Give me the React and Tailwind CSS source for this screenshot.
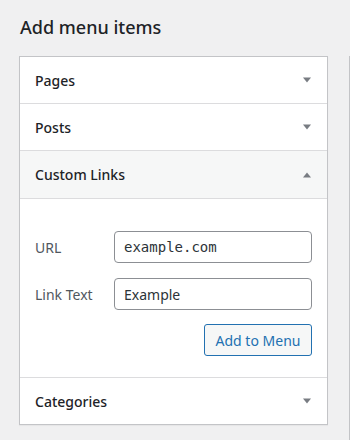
import React from "react";

const font = { fontFamily: '"Noto Sans", "Liberation Sans", sans-serif' };

function Arrow({ up }) {
  return (
    <svg width="10" height="6" viewBox="0 0 10 6" className="shrink-0">
      {up ? (
        <path d="M1 5.5 L5 0.5 L9 5.5 Z" fill="#787c82" />
      ) : (
        <path d="M1 0.5 L9 0.5 L5 5.5 Z" fill="#787c82" />
      )}
    </svg>
  );
}

function SectionTitle({ label, open, tall }) {
  return (
    <div
      className={`flex items-center justify-between pl-[15px] pr-[15px] text-[14px] font-medium text-[#1d2327] ${
        tall ? "h-[47px]" : "h-[46px]"
      } ${open ? "bg-[#f6f7f7]" : "bg-white"}`}
    >
      <span>{label}</span>
      <Arrow up={open} />
    </div>
  );
}

export default function App() {
  return (
    <div
      className="h-[440px] w-full overflow-hidden bg-[#f0f0f1] pl-[19px] pt-[14px]"
      style={font}
    >
      <h2 className="mb-[16px] pl-[1px] text-[18px] font-medium leading-[26px] text-[#1d2327]">
        Add menu items
      </h2>

      <div className="flex items-start gap-[21px]">
        {/* accordion */}
        <div className="w-[309px] shrink-0 border border-[#c3c4c7] bg-white shadow-[0_1px_1px_rgba(0,0,0,0.04)]">
          <SectionTitle label="Pages" />
          <div className="border-t border-[#dcdcde]">
            <SectionTitle label="Posts" />
          </div>
          <div className="border-t border-[#dcdcde]">
            <SectionTitle label="Custom Links" open tall />
          </div>

          <div className="border-t border-[#dcdcde] px-[15px] pb-[21px] pt-[32px]">
            <div className="flex items-center">
              <label className="w-[79px] text-[14px] text-[#50575e]">URL</label>
              <div className="flex h-[32px] flex-1 items-center rounded-[4px] border border-[#8c8f94] bg-white px-[9px] text-[14px] text-[#2c3338] font-['DejaVu_Sans_Mono',monospace]">
                example.com
              </div>
            </div>

            <div className="mt-[15px] flex items-center">
              <label className="w-[79px] text-[14px] text-[#50575e]">Link Text</label>
              <div className="flex h-[32px] flex-1 items-center rounded-[4px] border border-[#8c8f94] bg-white px-[9px] text-[14px] text-[#2c3338]">
                Example
              </div>
            </div>

            <div className="mt-[14px] flex justify-end">
              <button className="h-[32px] w-[108px] rounded-[3px] border border-[#2271b1] bg-[#f6f7f7] text-[14px] text-[#2271b1]">
                Add to Menu
              </button>
            </div>
          </div>

          <div className="border-t border-[#dcdcde]">
            <SectionTitle label="Categories" />
          </div>
        </div>

        {/* next column, mostly off screen */}
        <div className="h-[500px] w-[300px] shrink-0 border border-[#c3c4c7] bg-[#f0f0f1]" />
      </div>
    </div>
  );
}
